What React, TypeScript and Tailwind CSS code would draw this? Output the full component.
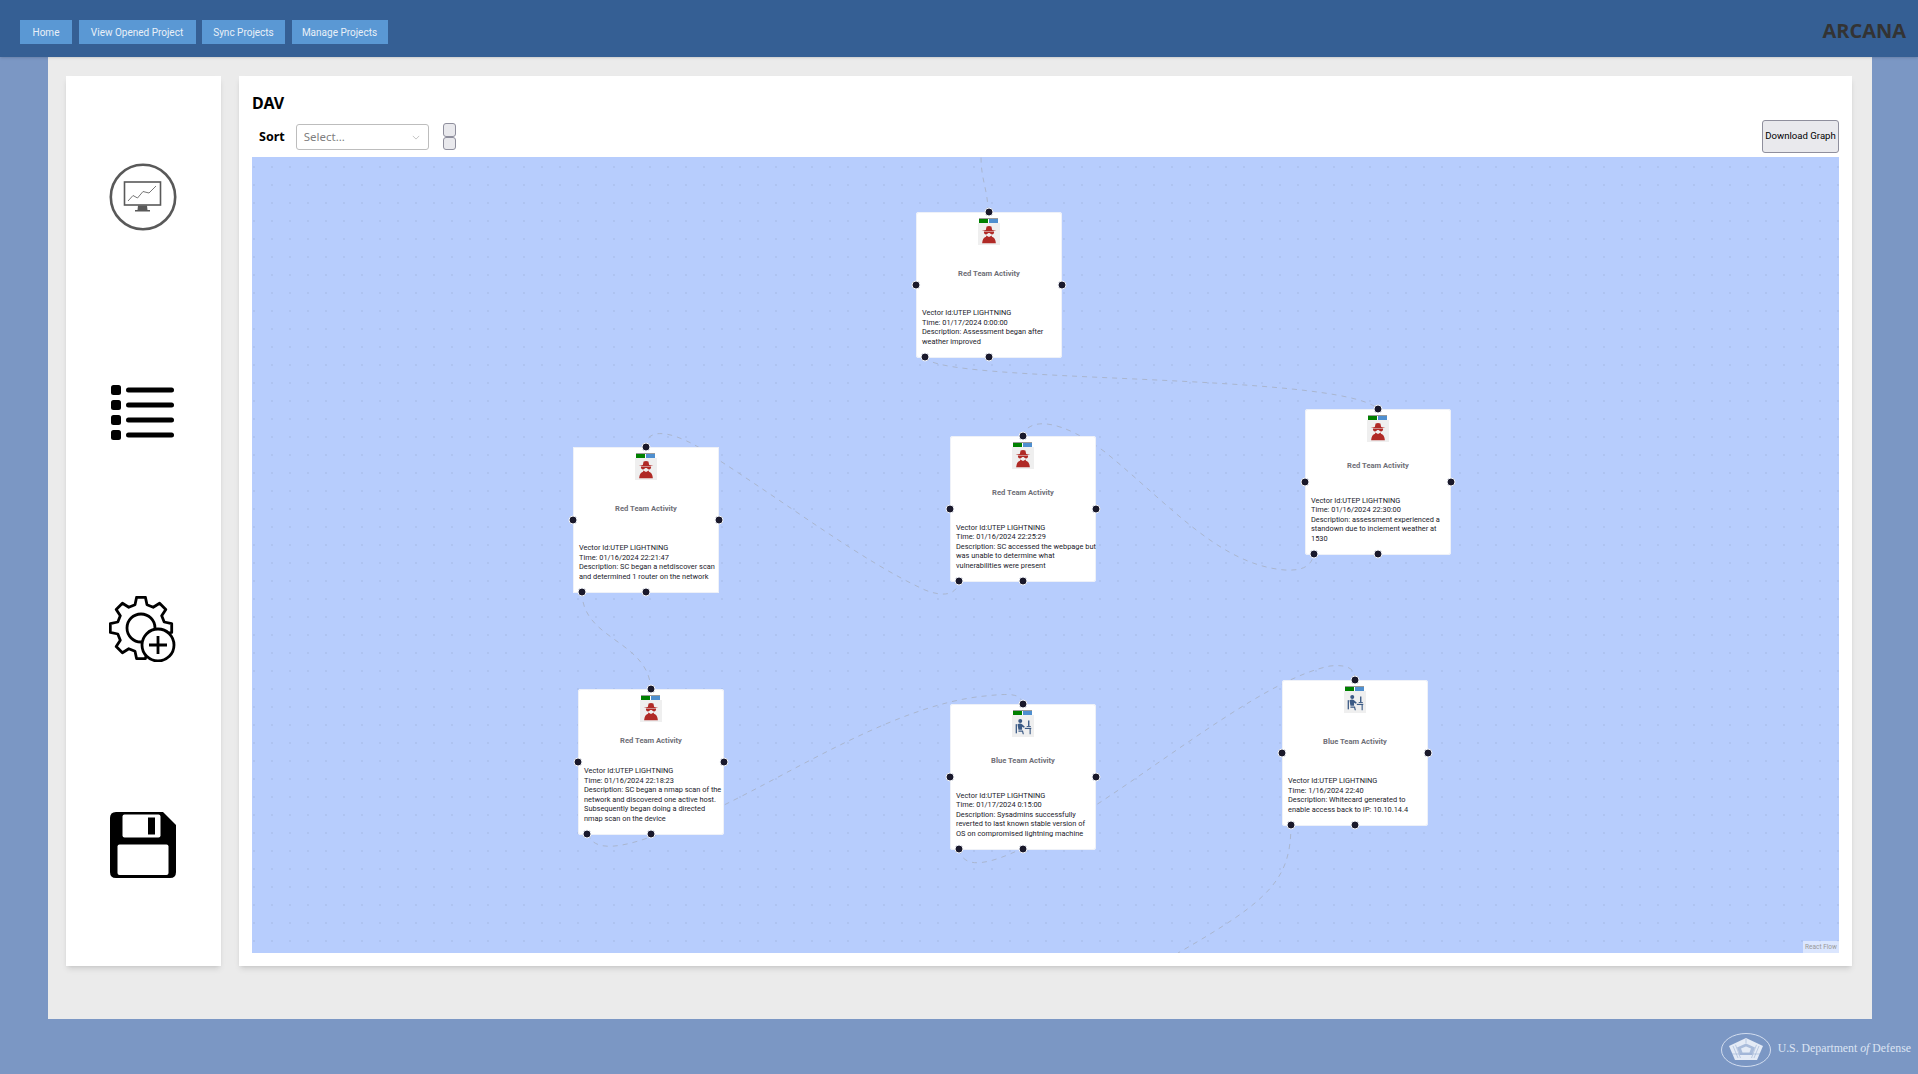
import React from "react";

type NodeData = {
  x: number;
  y: number;
  team: "red" | "blue";
  time: string;
  desc: string[];
  sharp?: boolean;
};

const nodes: NodeData[] = [
  { x: 916, y: 212, team: "red", time: "Time: 01/17/2024 0:00:00", desc: ["Description: Assessment began after", "weather improved"] },
  { x: 573, y: 447, team: "red", sharp: true, time: "Time: 01/16/2024 22:21:47", desc: ["Description: SC began a netdiscover scan", "and determined 1 router on the network"] },
  { x: 950, y: 436, team: "red", time: "Time: 01/16/2024 22:25:29", desc: ["Description: SC accessed the webpage but", "was unable to determine what", "vulnerabilities were present"] },
  { x: 1305, y: 409, team: "red", time: "Time: 01/16/2024 22:30:00", desc: ["Description: assessment experienced a", "standown due to inclement weather at", "1530"] },
  { x: 578, y: 689, team: "red", time: "Time: 01/16/2024 22:18:23", desc: ["Description: SC began a nmap scan of the", "network and discovered one active host.", "Subsequently began doing a directed", "nmap scan on the device"] },
  { x: 950, y: 704, team: "blue", time: "Time: 01/17/2024 0:15:00", desc: ["Description: Sysadmins successfully", "reverted to last known stable version of", "OS on compromised lightning machine"] },
  { x: 1282, y: 680, team: "blue", time: "Time: 1/16/2024 22:40", desc: ["Description: Whitecard generated to", "enable access back to IP: 10.10.14.4"] },
];

const edges = [
  "M988 212 C988 190 981 180 981 157",
  "M925 357 C934 384 1340 372 1378 409",
  "M645 447 C646 432 662 426 700 448 C790 505 860 560 925 590 C945 598 958 594 959 580",
  "M1022 436 C1030 416 1062 420 1105 452 C1170 505 1220 565 1285 570 C1303 571 1312 566 1314 553",
  "M582 592 C582 640 648 640 651 689",
  "M588 834 C596 858 640 846 724 805 C800 768 900 704 985 696 C1012 693 1022 694 1022 704",
  "M959 849 C964 874 1000 868 1096 805 C1180 750 1270 678 1330 666 C1350 664 1355 670 1355 680",
  "M1291 824 C1291 880 1270 900 1178 953",
];

function SpyIcon() {
  return (
    <svg viewBox="0 0 24 24" className="w-[22px] h-[22px]">
      <rect width="24" height="24" fill="#efefef" />
      <path d="M8.5 7.5 L9.4 3.8 Q12 3 14.6 3.8 L15.5 7.5 L20 8.6 L4 8.6 Z" fill="#b02a26" />
      <path d="M6.5 9.4 H17.5 V10.6 Q17 13 14.5 12.4 L12.6 11 H11.4 L9.5 12.4 Q7 13 6.5 10.6 Z" fill="#b02a26" />
      <path d="M9 13.5 L12 15.4 L15 13.5 L15.2 15 Q19 16 19.5 22 H4.5 Q5 16 8.8 15 Z" fill="#b02a26" />
    </svg>
  );
}

function BlueIcon() {
  return (
    <svg viewBox="0 0 24 24" className="w-[22px] h-[22px]">
      <rect width="24" height="24" fill="#efefef" />
      <g fill="#3b5a85">
        <circle cx="9" cy="6.5" r="2.2" />
        <path d="M6 10 Q9 8.5 11 10 L14 12.8 L13 14 L11 12.8 V16 H7 Z" />
        <path d="M7 17 H12 L13 21 H11.7 L11 18.4 H7 Z" />
        <rect x="4" y="10" width="1.4" height="10" />
        <rect x="14" y="14" width="7" height="1.3" />
        <rect x="19.2" y="15" width="1.2" height="6" />
        <rect x="17.5" y="6" width="1.5" height="6" />
        <rect x="16" y="12" width="4.5" height="1" />
      </g>
    </svg>
  );
}

function Handle({ className }: { className: string }) {
  return (
    <span
      className={`absolute w-[9px] h-[9px] rounded-full bg-[#1a192b] border border-[#f4f6fb] -translate-x-1/2 -translate-y-1/2 ${className}`}
    />
  );
}

function FlowNode({ n }: { n: NodeData }) {
  return (
    <div
      className={`absolute w-[146px] h-[146px] bg-white flex flex-col shadow-[inset_0_0_0_1px_#eef1f8] ${n.sharp ? "rounded-[1px]" : "rounded-[3px]"}`}
      style={{ left: n.x - 252, top: n.y - 157 }}
    >
      <div className="flex flex-col items-center pt-[6px] -ml-px">
        <div className="flex gap-[1px] h-[5px] border-t border-[#9a9a9a]">
          <span className="w-[9px] bg-[#008000]" />
          <span className="w-[9px] bg-[#4f8fcf]" />
        </div>
        {n.team === "red" ? <SpyIcon /> : <BlueIcon />}
      </div>
      <div className="flex-1 flex items-center justify-center pb-[6px] text-[7.6px] font-bold text-[#6f6f78] leading-none font-['Roboto',sans-serif]">
        {n.team === "red" ? "Red Team Activity" : "Blue Team Activity"}
      </div>
      <div className="pl-[6px] pb-[12px] text-[7.4px] leading-[9.5px] text-[#1a1a2a] whitespace-nowrap font-['Roboto',sans-serif]">
        <div>Vector Id:UTEP LIGHTNING</div>
        <div>{n.time}</div>
        {n.desc.map((d) => (
          <div key={d}>{d}</div>
        ))}
      </div>
      <Handle className="left-1/2 top-0" />
      <Handle className="left-0 top-1/2" />
      <Handle className="left-full top-1/2" />
      <Handle className="left-[9px] top-[145px]" />
      <Handle className="left-1/2 top-[145px]" />
    </div>
  );
}

function gearPath() {
  const cx = 32, cy = 32, teeth = 8, ro = 31, ri = 24;
  const pts: string[] = [];
  for (let i = 0; i < teeth; i++) {
    const a = (i * 2 * Math.PI) / teeth - Math.PI / 2;
    const d = (2 * Math.PI) / teeth;
    const list: [number, number][] = [
      [ri, a - d * 0.32],
      [ro, a - d * 0.18],
      [ro, a + d * 0.18],
      [ri, a + d * 0.32],
    ];
    for (const [r, t] of list) pts.push(`${(cx + r * Math.cos(t)).toFixed(1)} ${(cy + r * Math.sin(t)).toFixed(1)}`);
  }
  return "M" + pts.join(" L") + " Z";
}

function MonitorIcon() {
  return (
    <svg viewBox="0 0 68 68" className="w-[68px] h-[68px]">
      <circle cx="34" cy="34" r="32.2" fill="none" stroke="#595959" strokeWidth="2.6" />
      <rect x="15.5" y="19" width="36" height="23" fill="white" stroke="#595959" strokeWidth="1.6" />
      <path d="M19 38 L24 32.5 L28.5 35 L34 28.5 L40 30 L47 23" fill="none" stroke="#666" strokeWidth="0.9" />
      <path d="M29 42.5 H38 L38.5 47 H41 V48.5 H26 V47 H28.5 Z" fill="#595959" />
    </svg>
  );
}

function ListIcon() {
  return (
    <svg viewBox="0 0 64 56" className="w-[64px] h-[56px]">
      {[0, 15, 30, 45].map((y) => (
        <g key={y}>
          <rect x="0" y={y} width="10" height="10" rx="2.5" fill="black" />
          <rect x="15" y={y + 2.5} width="48" height="5" rx="2.5" fill="black" />
        </g>
      ))}
    </svg>
  );
}

function GearIcon() {
  return (
    <svg viewBox="0 0 68 66" className="w-[68px] h-[66px]">
      <path d={gearPath()} fill="white" stroke="black" strokeWidth="2.8" strokeLinejoin="round" />
      <circle cx="32" cy="32" r="14" fill="white" stroke="black" strokeWidth="2.8" />
      <circle cx="49" cy="49" r="16" fill="white" stroke="black" strokeWidth="2.8" />
      <path d="M49 40 V58 M40 49 H58" stroke="black" strokeWidth="2.8" />
    </svg>
  );
}

function SaveIcon() {
  return (
    <svg viewBox="0 0 66 66" className="w-[66px] h-[66px]">
      <path d="M6 0 H53 L66 13 V60 Q66 66 60 66 H6 Q0 66 0 60 V6 Q0 0 6 0 Z" fill="black" />
      <rect x="12.5" y="2.5" width="38" height="23" rx="2" fill="white" />
      <rect x="38" y="5.5" width="7" height="17" fill="black" />
      <rect x="7.5" y="32.5" width="51" height="30.5" rx="2" fill="white" />
    </svg>
  );
}

function PentagonSeal() {
  return (
    <svg viewBox="0 0 52 36" className="w-[52px] h-[36px]">
      <ellipse cx="26" cy="18" rx="24.5" ry="16.5" fill="none" stroke="#dbe4f3" strokeWidth="0.9" />
      <path d="M26 6 L43 14 L37 28 H15 L9 14 Z" fill="#e4ebf6" />
      <path d="M26 11.5 L35 15.5 L32 23 H20 L17 15.5 Z" fill="#a9bcdb" />
      <path d="M26 14.5 L31 16.5 L29.5 20.5 H22.5 L21 16.5 Z" fill="#e4ebf6" />
      <path d="M13 14 L18 26 M15.5 12.8 L20.5 26 M39 14 L34 26 M36.5 12.8 L31.5 26 M12 22 H40 M26 7 V11" stroke="#8ea6cc" strokeWidth="0.5" />
    </svg>
  );
}

function NavButton({ label, w }: { label: string; w: string }) {
  return (
    <button className={`h-[24px] bg-[#5a98d4] text-[#e9f0f8] text-[10px] font-['Roboto',sans-serif] ${w}`}>{label}</button>
  );
}

export default function App() {
  return (
    <div className="w-[1918px] h-[1074px] overflow-hidden bg-[#7b97c4] flex flex-col font-['Roboto',sans-serif]">
      <header className="h-[57px] shrink-0 bg-[#355f94] flex items-start justify-between pt-[20px] pl-[20px] pr-[12px] shadow-sm relative z-10">
        <nav className="flex gap-[6.5px]">
          <NavButton label="Home" w="w-[52px]" />
          <NavButton label="View Opened Project" w="w-[117px]" />
          <NavButton label="Sync Projects" w="w-[83px]" />
          <NavButton label="Manage Projects" w="w-[96px]" />
        </nav>
        <div className="text-[20px] font-bold text-[#333333] leading-none mt-[1px] font-['Open_Sans',sans-serif]">ARCANA</div>
      </header>

      <main className="ml-[48px] w-[1824px] h-[962px] shrink-0 bg-[#ebebeb] flex gap-[18px] pt-[19px] pl-[18px] pr-[20px]">
        <aside className="w-[155px] shrink-0 h-[890px] bg-white shadow-md flex flex-col items-center pt-[13px]">
          <div className="h-[216px] flex items-center justify-center -ml-px"><MonitorIcon /></div>
          <div className="h-[216px] flex items-center justify-center -ml-px"><ListIcon /></div>
          <div className="h-[216px] flex items-center justify-center -ml-px"><GearIcon /></div>
          <div className="h-[216px] flex items-center justify-center -ml-px"><SaveIcon /></div>
        </aside>

        <section className="flex-1 h-[890px] bg-white shadow-md pl-[13px] pr-[13px] flex flex-col">
          <h1 className="text-[16px] font-bold text-black leading-none pt-[19px] h-[44px] font-['Noto_Sans',sans-serif]">DAV</h1>
          <div className="flex items-start h-[37px]">
            <span className="ml-[7px] mt-[9px] text-[12.5px] font-bold text-black leading-[16px] font-['Noto_Sans',sans-serif]">Sort</span>
            <div className="ml-[11px] mt-[4px] w-[133px] h-[26px] rounded-[3px] border border-[#bdbdbd] bg-white flex items-center justify-between px-[7px]">
              <span className="text-[11.5px] text-[#808080] font-['Noto_Sans',sans-serif]">Select...</span>
              <svg viewBox="0 0 10 6" className="w-[8px] h-[5px] mr-[1px]">
                <path d="M1 1 L5 5 L9 1" fill="none" stroke="#c2c2c2" strokeWidth="1.2" />
              </svg>
            </div>
            <div className="ml-[14px] mt-[3px] flex flex-col">
              <button className="w-[13px] h-[13.5px] bg-[#e9e9ed] border border-[#8f8f9d] rounded-[3px]" />
              <button className="w-[13px] h-[13.5px] bg-[#e9e9ed] border border-[#8f8f9d] rounded-[3px]" />
            </div>
            <button className="ml-auto w-[77px] h-[33px] bg-[#e9e9ed] border border-[#8f8f9d] rounded-[3px] text-[9.6px] text-black whitespace-nowrap">
              Download Graph
            </button>
          </div>
          <div className="relative w-[1587px] h-[796px] overflow-hidden bg-[#b7cdfd] bg-[radial-gradient(#a4b8e2_0.6px,transparent_0.8px)] bg-[size:18px_18px] bg-[position:-7px_1px]">
            <svg viewBox="252 157 1587 796" className="absolute inset-0 w-full h-full" fill="none">
              {edges.map((d) => (
                <path key={d} d={d} stroke="#aab6cf" strokeWidth="1" strokeDasharray="5 5" />
              ))}
            </svg>
            {nodes.map((n) => (
              <FlowNode key={n.time} n={n} />
            ))}
            <div className="absolute right-0 bottom-0 w-[36px] h-[12px] bg-white/50 text-[#999] text-[6.5px] leading-[12px] text-center">React Flow</div>
          </div>
        </section>
      </main>

      <footer className="flex-1 flex items-start justify-end pt-[13px] pr-[7px]">
        <PentagonSeal />
        <span className="ml-[6px] mt-[8px] text-[11.8px] leading-[16px] text-[#dbe4f3] font-['Liberation_Serif',serif]">
          U.S. Department <i>of</i> Defense
        </span>
      </footer>
    </div>
  );
}
